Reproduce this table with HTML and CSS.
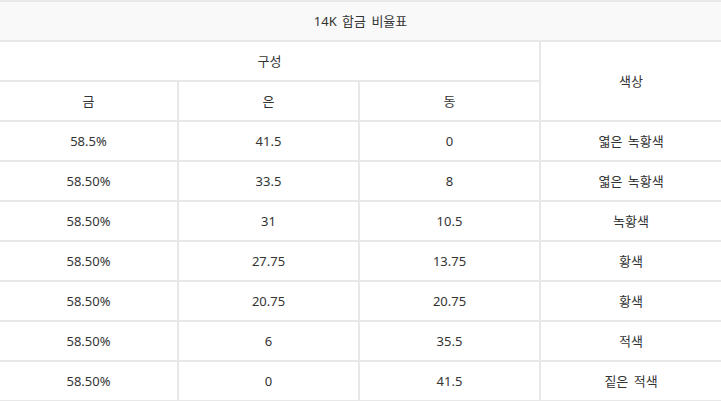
FILE: index.html
```html
<!DOCTYPE html>
<html lang="ko">
<head>
<meta charset="utf-8">
<title>14K 합금 비율표</title>
<link rel="stylesheet" href="styles.css">
</head>
<body>
<table class="alloy">
  <colgroup>
    <col class="c1"><col class="c2"><col class="c3"><col class="c4">
  </colgroup>
  <thead>
    <tr><th class="title" colspan="4">14K 합금 비율표</th></tr>
    <tr><th colspan="3">구성</th><th class="last" rowspan="2">색상</th></tr>
    <tr><th>금</th><th>은</th><th>동</th></tr>
  </thead>
  <tbody>
    <tr><td>58.5%</td><td>41.5</td><td>0</td><td class="last">엷은 녹황색</td></tr>
    <tr><td>58.50%</td><td>33.5</td><td>8</td><td class="last">엷은 녹황색</td></tr>
    <tr><td>58.50%</td><td>31</td><td>10.5</td><td class="last">녹황색</td></tr>
    <tr><td>58.50%</td><td>27.75</td><td>13.75</td><td class="last">황색</td></tr>
    <tr><td>58.50%</td><td>20.75</td><td>20.75</td><td class="last">황색</td></tr>
    <tr><td>58.50%</td><td>6</td><td>35.5</td><td class="last">적색</td></tr>
    <tr><td>58.50%</td><td>0</td><td>41.5</td><td class="last">짙은 적색</td></tr>
  </tbody>
</table>
</body>
</html>
```

FILE: styles.css
```css
html, body {
  margin: 0;
  padding: 0;
  background: #fff;
}

.alloy {
  width: 721px;
  table-layout: fixed;
  border-collapse: separate;
  border-spacing: 0;
  border-top: 2px solid #e8e8e8;
  font-family: "Noto Sans", "Noto Sans CJK KR", sans-serif;
  font-size: 13px;
  color: #333;
  word-spacing: 2px;
}

.c1 { width: 179px; }
.c2 { width: 181px; }
.c3 { width: 181px; }
.c4 { width: 180px; }

.alloy th,
.alloy td {
  box-sizing: border-box;
  height: 40px;
  padding: 0 4px;
  text-align: center;
  vertical-align: middle;
  font-weight: normal;
  border-right: 2px solid #e8e8e8;
  border-bottom: 2px solid #e8e8e8;
  line-height: 18px;
}

.alloy th.title {
  background: #f9f9f9;
  border-right: none;
}

.alloy .last {
  border-right: none;
}
```
